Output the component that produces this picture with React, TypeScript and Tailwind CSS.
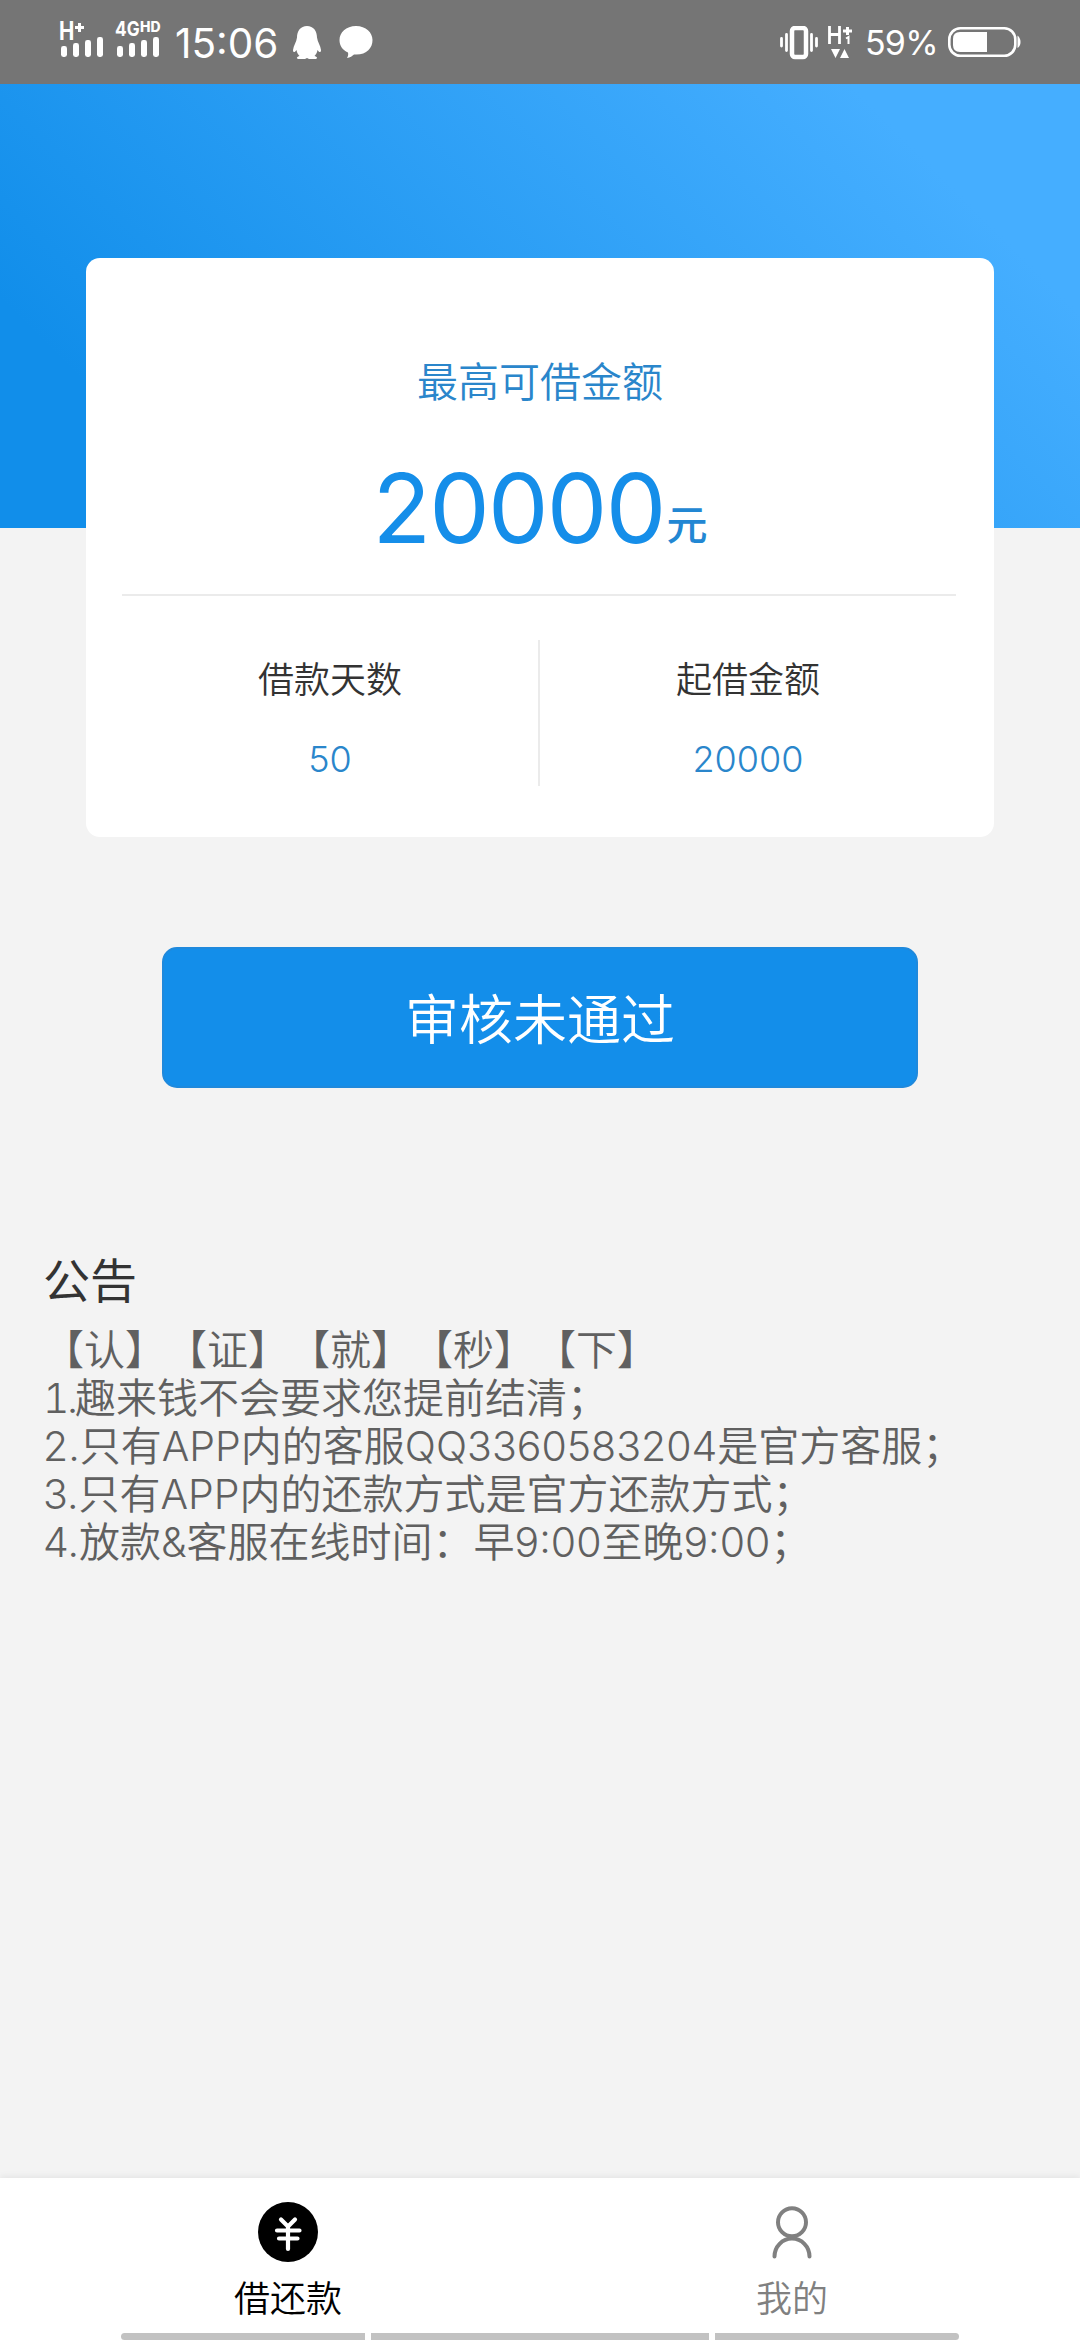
import { ReactNode } from 'react'

const notices = [
  { num: '', text: '【认】【证】【就】【秒】【下】' },
  { num: '1.', text: '趣来钱不会要求您提前结清；' },
  { num: '2.', text: '只有APP内的客服QQ3360583204是官方客服；' },
  { num: '3.', text: '只有APP内的还款方式是官方还款方式；' },
  { num: '4.', text: '放款&客服在线时间：早9:00至晚9:00；' },
]

function SignalBars() {
  return (
    <svg className="block h-5 w-[42px]" viewBox="0 0 42 20" fill="#fff">
      <rect x="0" y="9" width="6" height="11" rx="2.4" />
      <rect x="12" y="6" width="6" height="14" rx="2.4" />
      <rect x="24" y="3" width="6" height="17" rx="2.4" />
      <rect x="36" y="0" width="6" height="20" rx="2.4" />
    </svg>
  )
}

function StatusBar() {
  return (
    <div className="flex h-[84px] shrink-0 items-start bg-[#757575] font-normal text-white">
      {/* сеть 1 */}
      <div className="ml-[59px] mt-[21px] h-9 w-11">
        <div className="flex h-4 items-start font-bold leading-none">
          <span className="w-4 origin-left scale-x-[.82] text-[25px] leading-[20px]">H</span>
          <svg className="mt-[2px] size-[9px]" viewBox="0 0 9 9" fill="none" stroke="#fff" strokeWidth="3">
            <path d="M4.5 0v9M0 4.5h9" />
          </svg>
        </div>
        <div className="ml-0.5">
          <SignalBars />
        </div>
      </div>
      {/* сеть 2 */}
      <div className="ml-3 mt-[21px] h-9 w-[46px]">
        <div className="flex h-4 items-start font-bold leading-none">
          <span className="w-[25px] origin-left scale-x-[.84] text-[20.5px] leading-[16px]">4G</span>
          <span className="text-[14px] font-extrabold leading-[12px]">HD</span>
        </div>
        <div className="ml-0.5">
          <SignalBars />
        </div>
      </div>
      <div className="ml-[14px] mt-[22px] w-[107px] whitespace-nowrap text-[40.5px] leading-[44px]">15:06</div>
      <svg className="ml-[10px] mt-[25px] h-[35px] w-[30px]" viewBox="0 0 30 35" fill="#fff">
        <path d="M15 1C8.500 1 5 6 5 12.500C4.500 17 1.500 20.500 1 25C1 28 3 27.500 4.500 25C5 27.800 6 29.500 7.500 31C5 31.800 4 33 6 34H13L15 33L17 34H24C26 33 25 31.800 22.500 31C24 29.500 25 27.800 25.500 25C27 27.500 29 28 29 25C28.500 20.500 25.500 17 25 12.500C25 6 21.500 1 15 1Z" />
      </svg>
      <svg className="ml-4 mt-[25px] h-[34px] w-[36px]" viewBox="0 0 36 34" fill="#fff">
        <path d="M18 1C8 1 1.500 7.500 1.500 15C1.500 20.500 4.500 25 10 27.500C10.500 29.500 10 31.500 9 33C12 32.500 14.500 31 16 29.500C28 30.500 34.500 23.500 34.500 15C34.500 7.500 28 1 18 1Z" />
      </svg>

      <svg className="ml-auto mt-[26px] h-[34px] w-[38px]" viewBox="0 0 38 34" fill="none" stroke="#fff">
        <rect x="12" y="2" width="14" height="29" rx="3" strokeWidth="4.500" />
        <path d="M1.500 12.500v7.500M6.500 8.500v16M31.500 8.500v16M36.500 12.500v7.500" strokeWidth="2.800" strokeLinecap="round" />
      </svg>
      <svg className="ml-[10px] mt-[26px] h-8 w-6" viewBox="0 0 24 32" fill="none" stroke="#fff">
        <path d="M1.500 0v18M11.500 0v18M1.500 8.500h10" strokeWidth="2.800" />
        <path d="M19.500 1v8M15 5h9" strokeWidth="3" />
        <path d="M18 12.500L20.500 11v7" strokeWidth="2" />
        <path d="M3 23h9l-4.500 9zM12 32h9l-4.500-9z" fill="#fff" stroke="none" />
      </svg>
      <div className="ml-[13px] mt-[23px] w-[73px] whitespace-nowrap text-[34px] leading-[40px] tracking-[-0.8px]">59%</div>
      <svg className="ml-[10px] mr-[59px] mt-[27px] h-[30px] w-[73px]" viewBox="0 0 73 30" fill="none">
        <rect x="1.300" y="1.300" width="66" height="27.400" rx="11" stroke="#fff" strokeWidth="2.600" />
        <path d="M12 5H39V25H12Q5 25 5 18V12Q5 5 12 5Z" fill="#fff" />
        <path d="M69.500 8.500Q72.500 11 72.500 15T69.500 21Z" fill="#fff" />
      </svg>
    </div>
  )
}

function Stat({ label, value }: { label: string; value: string }) {
  return (
    <div className="flex flex-1 flex-col items-center pt-[17px]">
      <div className="text-[36px] leading-[46px] text-[#333]">{label}</div>
      <div className="mt-[33px] text-[36px] leading-[46px] text-[#2a86cb]">{value}</div>
    </div>
  )
}

function Tab({ label, color, children }: { label: string; color: string; children: ReactNode }) {
  return (
    <button className="flex flex-1 flex-col items-center pt-6" style={{ color }}>
      {children}
      <span className="mt-[14px] text-[36px] leading-[46px]">{label}</span>
    </button>
  )
}

export default function App() {
  return (
    <div className="flex h-[2340px] w-[1080px] flex-col overflow-hidden bg-[#f3f3f3] font-['Inter','Noto_Sans_CJK_SC',sans-serif] font-[350]">
      <StatusBar />

      <div className="h-[444px] shrink-0 bg-[linear-gradient(45deg,#118eea_15%,#45aeff_85%)] px-[86px] pt-[174px]">
        <div className="h-[579px] rounded-[14px] bg-white pl-9 pr-[38px] pt-[98px]">
          <div className="pl-0.5 text-center text-[41px] leading-[52px] text-[#2a86cb]">最高可借金额</div>
          <div className="mt-[42px] flex h-[146px] items-baseline justify-center border-b-2 border-[#ebebeb] pl-0.5 text-[#158ee9]">
            <span className="text-[96px] font-normal leading-[116px] tracking-[-1.8px]">20000</span>
            <span className="ml-0.5 -translate-y-[3px] text-[41px] font-medium text-[#2287d3]">元</span>
          </div>
          <div className="mt-11 flex h-[146px]">
            <Stat label="借款天数" value="50" />
            <div className="w-0.5 bg-[#ebebeb]" />
            <Stat label="起借金额" value="20000" />
          </div>
        </div>
      </div>

      <button className="mx-auto mt-[419px] h-[141px] w-[756px] shrink-0 rounded-[15px] border-2 border-[#1f89dc] bg-[#138eea] pt-1.5 text-[54px] leading-[78px] text-white">
        审核未通过
      </button>

      {/* объявление */}
      <div className="mt-[161px] px-[43px]">
        <h2 className="text-[47px] font-normal leading-[64px] text-[#333]">公告</h2>
        <div className="mt-[13px] whitespace-nowrap text-[41px] leading-[48px] text-[#606060] [text-spacing-trim:space-all]">
          {notices.map(({ num, text }) => (
            <p key={text} className="flex">
              {num && <span className={num === '1.' ? 'w-8 tabular-nums tracking-[-2.5px]' : ''}>{num}</span>}
              <span>{text}</span>
            </p>
          ))}
        </div>
      </div>

      <div className="mt-auto flex h-[162px] shrink-0 flex-col bg-white shadow-[0_-2px_6px_rgba(0,0,0,0.06)]">
        <div className="flex h-[155px] px-9">
          <Tab label="借还款" color="#000">
            <svg className="size-[60px]" viewBox="0 0 60 60" fill="none">
              <circle cx="30" cy="30" r="30" fill="#000" />
              <path
                d="M23 17.500L30 24.500L37 17.500M30 24.500V47M19 28.500H41.500M21 36.500H39.500"
                stroke="#fff"
                strokeWidth="4.200"
                strokeLinecap="round"
              />
            </svg>
          </Tab>
          <Tab label="我的" color="#808080">
            <svg className="size-[60px]" viewBox="0 0 60 60" fill="none" stroke="#808080" strokeWidth="4">
              <circle cx="30" cy="20.300" r="14" />
              <path d="M12.500 54.500a17.500 18 0 0 1 35 0" strokeLinecap="round" />
            </svg>
          </Tab>
        </div>
        <div className="flex h-[7px] gap-1.5 pl-[121px]">
          <div className="w-[244px] rounded-l-full bg-[#c2c2c2]" />
          <div className="w-[338px] bg-[#c2c2c2]" />
          <div className="w-[244px] rounded-r-full bg-[#c2c2c2]" />
        </div>
      </div>
    </div>
  )
}
